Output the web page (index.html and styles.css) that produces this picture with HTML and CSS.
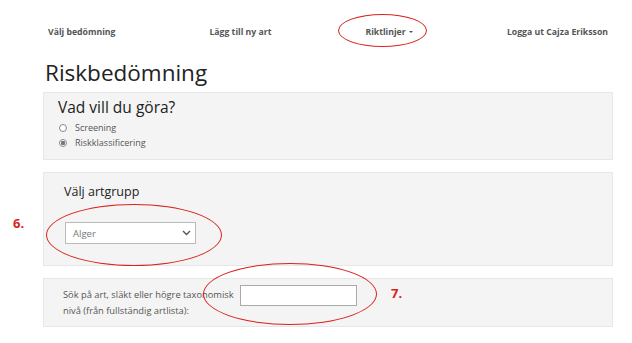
FILE: index.html
```html
<!DOCTYPE html>
<html lang="sv">
<head>
    <meta charset="UTF-8">
    <meta name="viewport" content="width=device-width, initial-scale=1.0">
    <title>Riskbedömning</title>
    <link rel="stylesheet" href="styles.css">
</head>
<body>
    <nav class="topnav">
        <a class="nav-link">Välj bedömning</a>
        <a class="nav-link">Lägg till ny art</a>
        <a class="nav-link dropdown">Riktlinjer <span class="caret"></span></a>
        <a class="nav-link">Logga ut Cajza Eriksson</a>
    </nav>

    <main class="container">
        <h1>Riskbedömning</h1>

        <section class="panel panel-choice">
            <h2>Vad vill du göra?</h2>
            <label class="radio"><span class="dot"></span>Screening</label>
            <label class="radio checked"><span class="dot"></span>Riskklassificering</label>
        </section>

        <section class="panel panel-group">
            <h3>Välj artgrupp</h3>
            <div class="select">
                <span>Alger</span>
                <svg class="chevron" width="9" height="6" viewBox="0 0 9 6">
                    <path d="M1 1 L4.5 4.5 L8 1" fill="none" stroke="#555" stroke-width="1.4"/>
                </svg>
            </div>
        </section>

        <section class="panel panel-search">
            <label class="search-label">Sök på art, släkt eller högre taxonomisk<br>nivå (från fullständig artlista):</label>
            <input class="search-input" type="text">
        </section>
    </main>

    <!-- markeringar ovanpå skärmdumpen -->
    <div class="ring ring-nav"></div>
    <div class="ring ring-6"></div>
    <div class="ring ring-7"></div>
    <span class="step step-6">6.</span>
    <span class="step step-7">7.</span>
</body>
</html>
```

FILE: styles.css
```css
body {
    margin: 0;
    font-family: "Open Sans", Arial, sans-serif;
    background: #fff;
    color: #333;
    position: relative;
}
.topnav {
    display: flex;
    justify-content: space-between;
    padding: 25px 24px 0 48px;
}
.nav-link {
    font-size: 8.7px;
    font-weight: 700;
    line-height: 14px;
    color: #555;
}
.caret {
    display: inline-block;
    width: 0;
    height: 0;
    margin-left: 1px;
    vertical-align: 2px;
    border-left: 2px solid transparent;
    border-right: 2px solid transparent;
    border-top: 2px solid #555;
}
.container {
    padding-left: 43px;
    width: 570px;
}
h1 {
    font-size: 22.5px;
    font-weight: 400;
    line-height: 29px;
    margin: 19px 0 5px 2px;
    color: #222;
}
.panel {
    background: #f4f4f4;
    border: 1px solid #e7e7e7;
    margin-bottom: 12px;
}
.panel-choice {
    padding: 3px 14px 9px;
}
h2 {
    font-size: 15.5px;
    font-weight: 400;
    line-height: 22px;
    margin: 0 0 2px;
    color: #222;
}
.radio {
    display: flex;
    align-items: center;
    font-size: 9px;
    line-height: 15px;
    color: #555;
}
.dot {
    width: 6px;
    height: 6px;
    margin: 0 8px 0 1px;
    border: 1px solid #888;
    border-radius: 50%;
    background: #fff;
    box-sizing: content-box;
}
.radio.checked .dot {
    background: radial-gradient(circle, #777 0 2px, #fff 2.5px);
}
.panel-group {
    padding: 9px 20px 21px;
}
h3 {
    font-size: 12.5px;
    font-weight: 400;
    line-height: 20px;
    margin: 0 0 20px;
    color: #222;
}
.select {
    display: flex;
    align-items: center;
    justify-content: space-between;
    width: 131px;
    height: 22px;
    margin-left: 1px;
    padding: 0 4px 0 7px;
    box-sizing: border-box;
    background: #fff;
    border: 1px solid #bbb;
    font-size: 9.5px;
    color: #777;
}
.panel-search {
    display: flex;
    align-items: flex-start;
    padding: 6px 20px 7px 19px;
}
.search-label {
    width: 177px;
    flex-shrink: 0;
    padding-top: 2px;
    font-size: 9.3px;
    line-height: 16px;
    color: #555;
}
.search-input {
    width: 117px;
    height: 21px;
    margin: 0;
    padding: 0;
    box-sizing: border-box;
    border: 1px solid #aaa;
    background: #fff;
}
.ring {
    position: absolute;
    border: 1.5px solid #d9231d;
    border-radius: 50%;
    box-sizing: border-box;
}
.ring-nav {
    left: 338px;
    top: 14px;
    width: 89px;
    height: 33px;
}
.ring-6 {
    left: 46px;
    top: 204px;
    width: 176px;
    height: 62px;
}
.ring-7 {
    left: 203px;
    top: 263px;
    width: 174px;
    height: 62px;
}
.step {
    position: absolute;
    font-size: 13px;
    font-weight: 700;
    line-height: 16px;
    color: #d9231d;
}
.step-6 {
    left: 13px;
    top: 215px;
}
.step-7 {
    left: 391px;
    top: 285px;
}
```
